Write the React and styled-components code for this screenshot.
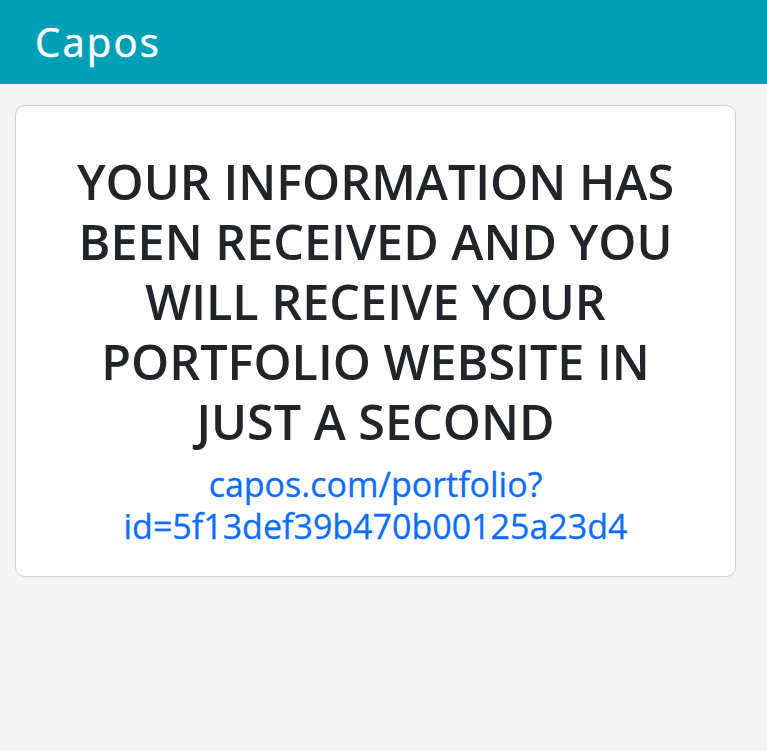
import React from 'react';
import styled, { createGlobalStyle } from 'styled-components';

const GlobalStyle = createGlobalStyle`
  html, body {
    margin: 0;
    padding: 0;
    background: #f4f4f4;
    font-family: "Open Sans", "Noto Sans", Arial, sans-serif;
  }
`;

const portfolioId = '5f13def39b470b00125a23d4';

const App = () => {
  return (
    <>
      <GlobalStyle />
      <Header>
        <Brand>Capos</Brand>
      </Header>
      <Main>
        <Card>
          <Title>
            YOUR INFORMATION HAS BEEN RECEIVED AND YOU WILL RECEIVE YOUR PORTFOLIO WEBSITE IN JUST A SECOND
          </Title>
          <PortfolioLink href={`#portfolio?id=${portfolioId}`}>
            capos.com/portfolio?<br />id={portfolioId}
          </PortfolioLink>
        </Card>
      </Main>
    </>
  );
};

export default App;

const Header = styled.header`
  height: 84px;
  background-color: #009fb7;
  display: flex;
  align-items: center;
  padding: 0 35px;
`;

const Brand = styled.h1`
  margin: 0;
  color: #fff;
  font-family: "Open Sans", "Noto Sans", sans-serif;
  font-weight: 400;
  font-size: 40px;
  letter-spacing: 2.2px;
  -webkit-text-stroke: 0.5px #fff;
  margin-top: -2px;
`;

const Main = styled.main`
  padding: 21px 31px 0 15px;
`;

const Card = styled.div`
  background: #fff;
  border: 1px solid #cfcfcf;
  border-radius: 10px;
  padding: 45px 30px 29px;
  display: flex;
  flex-direction: column;
  align-items: center;
  text-align: center;
`;

const Title = styled.h2`
  margin: 0 0 12px;
  color: #212529;
  font-weight: 600;
  font-size: 48.5px;
  line-height: 60px;
  max-width: 640px;
`;

const PortfolioLink = styled.a`
  color: #0d6efd;
  text-decoration: none;
  font-weight: 400;
  font-size: 34px;
  line-height: 42px;
  -webkit-text-stroke: 0.3px #0d6efd;
`;
